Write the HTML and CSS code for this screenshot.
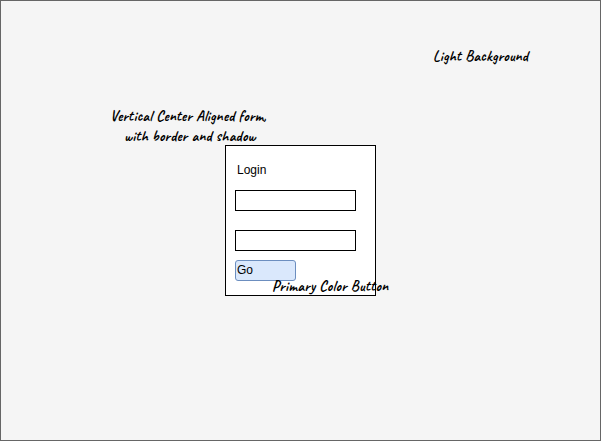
FILE: index.html
```
<!DOCTYPE html>
<html lang="en"><head><meta charset="utf-8"><title>Login</title><link rel="stylesheet" href="styles.css"></head>
<body>
<main class="screen">
<form class="card">
<h1 class="title">Login</h1>
<input class="field" type="text" aria-label="Username">
<input class="field" type="password" aria-label="Password">
<button class="go" type="button">Go</button>
</form>
<p class="note note-bg">Light Background</p>
<p class="note note-form">Vertical Center Aligned form,<br><span class="second">with border and shadow</span></p>
<p class="note note-btn">Primary Color Button</p>
</main>
</body></html>
```
FILE: styles.css
```
* { box-sizing: border-box; }
body { margin: 0; font-family: "Liberation Sans", Arial, sans-serif; }
.screen { position: relative; width: 601px; height: 441px; border: 1px solid #666; background: #f5f5f5; display: flex; align-items: center; justify-content: center; overflow: hidden; }
.card { width: 151px; height: 151px; border: 1px solid #000; background: #fff; display: flex; flex-direction: column; align-items: flex-start; padding: 17px 9px 0; }
.title { margin: 0 0 13px 2px; font-size: 12px; line-height: 14px; font-weight: 400; }
.field { width: 121px; height: 21px; margin: 0 0 19px; padding: 0 2px; border: 1px solid #000; background: #fff; border-radius: 0; }
.field + .go { margin-top: -10px; }
.go { width: 61px; height: 21px; padding: 0 1px 2px; border: 1px solid #6c8ebf; border-radius: 3px; background: #dae8fc; font: 12px/14px "Liberation Sans", Arial, sans-serif; color: #000; text-align: left; }
.note { position: absolute; margin: 0; font: 600 15px/20px "Caveat", "Comic Neue", cursive; letter-spacing: 0.27px; white-space: nowrap; text-align: center; color: #000; }
.second { padding-left: 3px; }
.note-bg { left: 432px; top: 46px; }
.note-form { left: 109px; top: 106px; }
.note-btn { left: 271px; top: 276px; letter-spacing: 0.31px; }
```
